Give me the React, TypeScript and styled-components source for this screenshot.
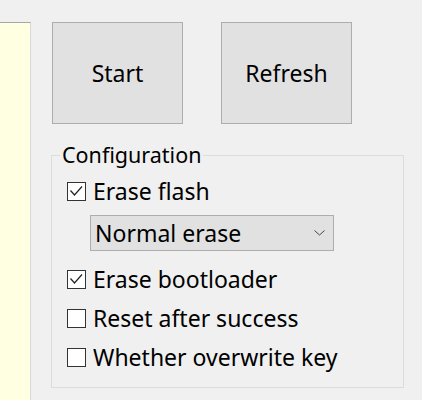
import React from 'react'
import styled, { createGlobalStyle } from 'styled-components';

const GlobalStyle = createGlobalStyle`
    html, body {
        margin: 0;
        padding: 0;
        background: #f0f0f0;
    }
    body {
        font-family: 'Noto Sans', 'Open Sans', sans-serif;
        color: #000;
    }
`;

interface OptionProps {
    label: string;
    checked?: boolean;
}

const CheckBox = ({ checked }: { checked?: boolean }) => (
    <Box>
        {checked && (
            <svg width="17" height="17" viewBox="0 0 17 17">
                <polyline points="2.5,7.5 6.5,12 14,3.5" fill="none" stroke="#222" strokeWidth="1.2" />
            </svg>
        )}
    </Box>
);

const Option = ({ label, checked }: OptionProps) => (
    <Row>
        <CheckBox checked={checked} />
        <span className="label">{label}</span>
    </Row>
);

const App = () => {
    return (
        <Page>
            <GlobalStyle />
            <LogPanel />
            <Main>
                <Buttons>
                    <Button>Start</Button>
                    <Button>Refresh</Button>
                </Buttons>
                <Group>
                    <legend>Configuration</legend>
                    <Option label="Erase flash" checked />
                    <Combo>
                        <span>Normal erase</span>
                        <svg width="11" height="6" viewBox="0 0 11 6">
                            <polyline points="0.5,0.5 5.5,5 10.5,0.5" fill="none" stroke="#444" strokeWidth="1" />
                        </svg>
                    </Combo>
                    <Option label="Erase bootloader" checked />
                    <Option label="Reset after success" />
                    <Option label="Whether overwrite key" />
                </Group>
            </Main>
        </Page>
    )
}

export default App

const Page = styled.div`
    display: flex;
    width: 422px;
    height: 400px;
    overflow: hidden;
`;

const LogPanel = styled.div`
    width: 30px;
    height: 378px;
    margin-top: 22px;
    background: #ffffe1;
    border-top: 1px solid #a8a8a8;
    border-right: 1px solid #d8d8d8;
    flex-shrink: 0;
`;

const Main = styled.div`
    display: flex;
    flex-direction: column;
    padding-left: 20px;
`;

const Buttons = styled.div`
    display: flex;
    gap: 38px;
    margin-top: 22px;
    padding-left: 1px;
`;

const Button = styled.button`
    width: 131px;
    height: 102px;
    background: #e1e1e1;
    border: 1px solid #adadad;
    font-family: inherit;
    font-size: 23px;
    color: #000;
    padding: 0;
`;

const Group = styled.fieldset`
    width: 353px;
    box-sizing: border-box;
    margin: 18px 0 0 0;
    padding: 4px 0 10px 15px;
    border: 1px solid #dcdcdc;
    display: flex;
    flex-direction: column;
    legend {
        font-size: 21.5px;
        line-height: 26px;
        padding: 0 2px;
        margin-left: -7px;
    }
`;

const Row = styled.div`
    display: flex;
    align-items: center;
    gap: 7px;
    height: 39px;
    font-size: 23px;
    .label {
        line-height: 1;
    }
`;

const Box = styled.div`
    width: 17px;
    height: 17px;
    border: 1px solid #333;
    background: #fff;
    display: flex;
    align-items: center;
    justify-content: center;
    flex-shrink: 0;
`;

const Combo = styled.div`
    display: flex;
    align-items: center;
    justify-content: space-between;
    width: 244px;
    height: 36px;
    box-sizing: border-box;
    margin: 4px 0 9px 23px;
    padding: 0 8px 0 4px;
    background: #e1e1e1;
    border: 1px solid #adadad;
    font-size: 23px;
`;
